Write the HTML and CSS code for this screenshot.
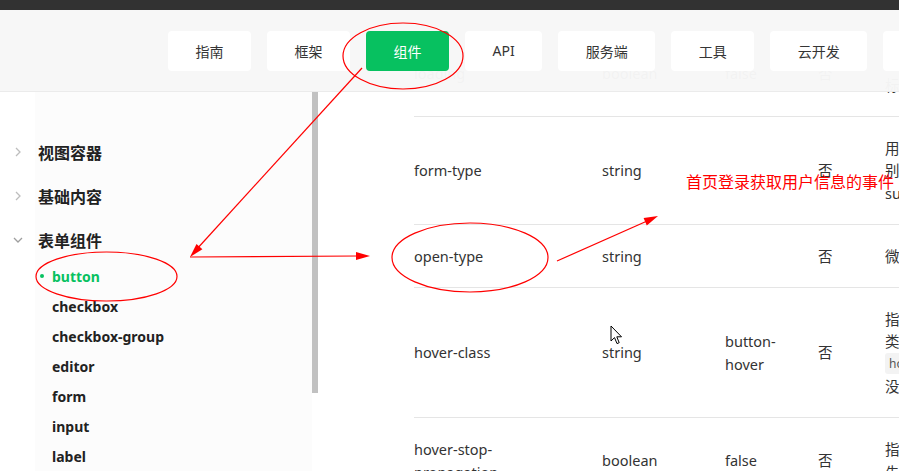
FILE: index.html
```html
<!DOCTYPE html>
<html lang="zh-CN">
<head>
<meta charset="utf-8">
<title>button | 微信开放文档</title>
<link rel="stylesheet" href="styles.css">
</head>
<body>
<div class="topbar"></div>
<div class="page">
  <header class="header">
    <nav class="nav">
      <a class="nav-btn">指南</a>
      <a class="nav-btn">框架</a>
      <a class="nav-btn active">组件</a>
      <a class="nav-btn">API</a>
      <a class="nav-btn">服务端</a>
      <a class="nav-btn">工具</a>
      <a class="nav-btn">云开发</a>
      <a class="nav-btn">社区</a>
    </nav>
  </header>

  <div class="layout">
    <aside class="sidebar">
      <div class="side-list">
        <div class="cat">
          <span class="chev"><svg width="10" height="10" viewBox="0 0 10 10"><polyline points="3,1 7,5 3,9" fill="none" stroke="#bdbdbd" stroke-width="1.3"/></svg></span>
          <span class="cat-label">视图容器</span>
        </div>
        <div class="cat">
          <span class="chev"><svg width="10" height="10" viewBox="0 0 10 10"><polyline points="3,1 7,5 3,9" fill="none" stroke="#bdbdbd" stroke-width="1.3"/></svg></span>
          <span class="cat-label">基础内容</span>
        </div>
        <div class="cat">
          <span class="chev"><svg width="10" height="10" viewBox="0 0 10 10"><polyline points="1,3 5,7 9,3" fill="none" stroke="#9e9e9e" stroke-width="1.3"/></svg></span>
          <span class="cat-label">表单组件</span>
        </div>
        <ul class="sub-list">
          <li class="sub-item active"><span class="dot"></span>button</li>
          <li class="sub-item"><span class="dot"></span>checkbox</li>
          <li class="sub-item"><span class="dot"></span>checkbox-group</li>
          <li class="sub-item"><span class="dot"></span>editor</li>
          <li class="sub-item"><span class="dot"></span>form</li>
          <li class="sub-item"><span class="dot"></span>input</li>
          <li class="sub-item"><span class="dot"></span>label</li>
        </ul>
      </div>
      <div class="scroll-track"><div class="scroll-thumb"></div></div>
    </aside>

    <main class="content">
      <table class="props">
        <colgroup>
          <col class="c-name"><col class="c-type"><col class="c-def"><col class="c-req"><col class="c-desc">
        </colgroup>
        <tbody>
          <tr>
            <td class="name">loading</td>
            <td>boolean</td>
            <td>false</td>
            <td>否</td>
            <td class="desc"><span class="ln">名称前是否带 loading 图</span><span class="ln">标</span></td>
          </tr>
          <tr>
            <td class="name">form-type</td>
            <td>string</td>
            <td></td>
            <td>否</td>
            <td class="desc"><span class="ln">用于 form 组件，点击分</span><span class="ln">别会触发 form 组件的</span><span class="ln">submit/reset 事件</span></td>
          </tr>
          <tr>
            <td class="name">open-type</td>
            <td>string</td>
            <td></td>
            <td>否</td>
            <td class="desc"><span class="ln">微信开放能力</span></td>
          </tr>
          <tr>
            <td class="name">hover-class</td>
            <td>string</td>
            <td class="def">button-hover</td>
            <td>否</td>
            <td class="desc"><span class="ln">指定按钮按下去的样式</span><span class="ln">类。当</span><span class="ln"><code class="chip">hover-class="none"</code></span><span class="ln">没有点击态效果</span></td>
          </tr>
          <tr>
            <td class="name">hover-stop-propagation</td>
            <td>boolean</td>
            <td>false</td>
            <td>否</td>
            <td class="desc"><span class="ln">指定是否阻止本节点的祖</span><span class="ln">先节点出现点击态</span></td>
          </tr>
        </tbody>
      </table>
    </main>
  </div>
</div>

<svg class="annot" width="899" height="471" viewBox="0 0 899 471">
  <g fill="none" stroke="#ff0000" stroke-width="1.2">
    <ellipse cx="403" cy="56" rx="60" ry="33"/>
    <ellipse cx="106.5" cy="276.5" rx="70.5" ry="24.5"/>
    <ellipse cx="470" cy="257.5" rx="78" ry="34.5"/>
    <line x1="362" y1="68" x2="196" y2="250"/>
    <line x1="190" y1="257" x2="358" y2="256"/>
    <line x1="557" y1="261" x2="646" y2="221.5"/>
  </g>
  <g fill="#ff0000">
    <polygon points="190,257 202.4,249.3 196.5,244"/>
    <polygon points="370,256 356,252 356,260"/>
    <polygon points="658,216 646.8,225.4 643.6,218"/>
  </g>
</svg>
<div class="annot-text">首页登录获取用户信息的事件</div>
<svg class="cursor" width="13" height="21" viewBox="0 0 13 21"><path d="M1,1 L1,16 L4.5,12.6 L7,18.6 L9.2,17.7 L6.8,11.8 L11.5,11.8 Z" fill="#fff" stroke="#000" stroke-width="1" stroke-linejoin="round"/></svg>
</body>
</html>
```

FILE: styles.css
```css
html, body {
  margin: 0;
  padding: 0;
}
body {
  width: 899px;
  height: 471px;
  overflow: hidden;
  background: #fff;
  font-family: "Noto Sans", "Noto Sans CJK SC", sans-serif;
  color: #333;
  position: relative;
}
.topbar {
  height: 10px;
  background: #323232;
}
.page {
  position: relative;
}
.header {
  position: absolute;
  top: 0;
  left: 0;
  right: 0;
  height: 81px;
  background: rgba(247, 247, 247, 0.975);
  border-bottom: 1px solid #ebebeb;
  display: flex;
  align-items: center;
  overflow: hidden;
  z-index: 2;
}
.nav {
  display: flex;
  gap: 16px;
  padding-left: 168px;
  white-space: nowrap;
}
.nav-btn {
  display: flex;
  align-items: center;
  justify-content: center;
  height: 40px;
  padding: 0 27.5px;
  background: #fff;
  border-radius: 4px;
  font-size: 14px;
  color: #353535;
  flex-shrink: 0;
}
.nav-btn.active {
  background: #07c160;
  color: #fff;
}
.layout {
  display: flex;
  align-items: flex-start;
}
.sidebar {
  display: flex;
  margin-top: 82px;
  flex-shrink: 0;
}
.side-list {
  width: 312px;
  height: 380px;
  padding-top: 38px;
  box-sizing: border-box;
  background: linear-gradient(to right, #fff 35px, #fcfcfc 35px);
}
.cat {
  display: flex;
  align-items: center;
  height: 44px;
}
.chev {
  width: 38px;
  display: flex;
  justify-content: center;
  padding-right: 2px;
  box-sizing: border-box;
}
.chev svg {
  display: block;
}
.cat-label {
  font-size: 16px;
  font-weight: 700;
  color: #222;
}
.sub-list {
  list-style: none;
  margin: -1px 0 0;
  padding: 0 0 0 40px;
}
.sub-item {
  display: flex;
  align-items: center;
  height: 30px;
  font-size: 14px;
  font-weight: 700;
  color: #222;
}
.dot {
  width: 4px;
  height: 4px;
  border-radius: 50%;
  margin-right: 8px;
  background: transparent;
}
.sub-item.active {
  color: #07c160;
}
.sub-item.active .dot {
  background: #07c160;
}
.scroll-track {
  width: 6px;
  height: 380px;
  background: #fff;
}
.scroll-thumb {
  width: 6px;
  height: 301px;
  background: #c1c1c1;
}
.content {
  flex: 1;
  min-width: 0;
  padding-left: 96px;
  padding-top: 21px;
}
.props {
  border-collapse: collapse;
  table-layout: fixed;
  width: 800px;
  font-size: 14.5px;
  line-height: 22.5px;
  color: #333;
}
.c-name { width: 188px; }
.c-type { width: 123px; }
.c-def { width: 93px; }
.c-req { width: 67px; }
.c-desc { width: 329px; }
.props td {
  padding: 20px 0 19.5px;
  vertical-align: middle;
  border-bottom: 1px solid #e5e5e5;
}
.props td.name {
  padding-right: 40px;
}
.props td.def {
  padding-right: 20px;
}
.desc .ln {
  display: block;
  white-space: nowrap;
  height: 22.5px;
}
.chip {
  display: inline-block;
  vertical-align: top;
  font-family: "Noto Sans", "Noto Sans CJK SC", sans-serif;
  font-size: 12px;
  line-height: 21px;
  padding: 0 4px;
  background: #f3f3f3;
  border-radius: 3px;
  color: #555;
}
.annot {
  position: absolute;
  top: 0;
  left: 0;
  z-index: 5;
  pointer-events: none;
}
.annot-text {
  position: absolute;
  left: 686px;
  top: 170px;
  font-family: "Noto Sans CJK SC", sans-serif;
  font-size: 16px;
  line-height: 22px;
  color: #ff0000;
  white-space: nowrap;
  z-index: 5;
}
.cursor {
  position: absolute;
  left: 610px;
  top: 325px;
  z-index: 6;
}
```
